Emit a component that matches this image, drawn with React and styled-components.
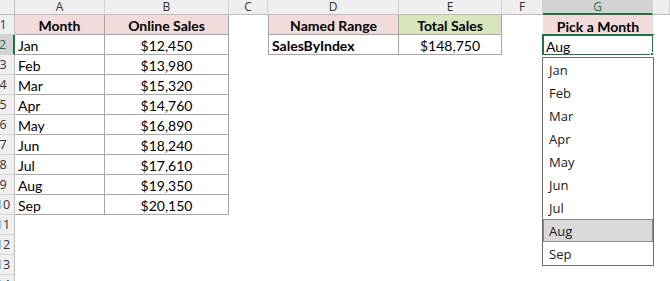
import React from 'react';
import styled, { createGlobalStyle } from 'styled-components';

const GlobalStyle = createGlobalStyle`
  body {
    margin: 0;
    background: #ffffff;
    overflow: hidden;
  }
`;

const widths = [90, 124, 39, 131, 103, 41, 110, 17];
const letters = ['A', 'B', 'C', 'D', 'E', 'F', 'G', 'H'];

const fills = {
  pink: '#f2dcdb',
  green: '#d8e4bc',
};

const sales = [
  ['Jan', '$12,450'],
  ['Feb', '$13,980'],
  ['Mar', '$15,320'],
  ['Apr', '$14,760'],
  ['May', '$16,890'],
  ['Jun', '$18,240'],
  ['Jul', '$17,610'],
  ['Aug', '$19,350'],
  ['Sep', '$20,150'],
];

const months = ['Jan', 'Feb', 'Mar', 'Apr', 'May', 'Jun', 'Jul', 'Aug', 'Sep'];

// cells keyed by row then column letter
const cells = {
  1: {
    A: { text: 'Month', fill: 'pink', bold: true, align: 'center', boxed: true },
    B: { text: 'Online Sales', fill: 'pink', bold: true, align: 'center', boxed: true },
    D: { text: 'Named Range', fill: 'pink', bold: true, align: 'center', boxed: true, left: true },
    E: { text: 'Total Sales', fill: 'green', bold: true, align: 'center', boxed: true },
    G: { text: 'Pick a Month', fill: 'pink', bold: true, align: 'center' },
  },
  2: {
    D: { text: 'SalesByIndex', bold: true, boxed: true, left: true },
    E: { text: '$148,750', align: 'center', boxed: true },
  },
};
sales.forEach(([m, v], i) => {
  const r = i + 2;
  cells[r] = cells[r] || {};
  cells[r].A = { text: m, boxed: true };
  cells[r].B = { text: v, align: 'center', boxed: true };
});

const Sheet = styled.div`
  display: grid;
  grid-template-columns: 15px ${widths.map((w) => w + 'px').join(' ')};
  grid-template-rows: 15px repeat(14, 20px);
  font-family: Lato, 'Liberation Sans', sans-serif;
  font-size: 14px;
  color: #000;
`;

const Corner = styled.div`
  background: #efefef;
  border-right: 1px solid #bdbdbd;
  border-bottom: 1px solid #bdbdbd;
`;

const ColHead = styled.div`
  display: flex;
  align-items: center;
  justify-content: center;
  background: ${(p) => (p.$active ? '#d2d2d2' : '#efefef')};
  color: ${(p) => (p.$active ? '#217346' : '#333')};
  border-right: 1px solid #d4d4d4;
  border-bottom: ${(p) => (p.$active ? '2px solid #217346' : '1px solid #bdbdbd')};
  font-family: 'Open Sans', sans-serif;
  font-size: 12px;
  line-height: 14px;
`;

const RowHead = styled.div`
  display: flex;
  align-items: center;
  justify-content: center;
  padding-right: 8px;
  background: ${(p) => (p.$active ? '#d2d2d2' : '#efefef')};
  color: ${(p) => (p.$active ? '#217346' : '#333')};
  border-bottom: 1px solid #d4d4d4;
  border-right: ${(p) => (p.$active ? '2px solid #217346' : '1px solid #bdbdbd')};
  font-family: 'Open Sans', sans-serif;
  font-size: 12.5px;
  white-space: nowrap;
`;

const Cell = styled.div`
  position: relative;
  display: flex;
  align-items: flex-end;
  justify-content: ${(p) => (p.$align === 'center' ? 'center' : 'flex-start')};
  padding: 0 3px;
  background: ${(p) => fills[p.$fill] || '#fff'};
  font-weight: ${(p) => (p.$bold ? 700 : 400)};
  border-right: ${(p) => (p.$boxed ? '1px solid #a6a6a6' : 'none')};
  border-bottom: ${(p) => (p.$boxed ? '1px solid #a6a6a6' : 'none')};
  border-left: ${(p) => (p.$left ? '1px solid #a6a6a6' : 'none')};
  white-space: nowrap;
  line-height: 16px;
`;

const Selection = styled.div`
  position: absolute;
  inset: -1px;
  border: 2px solid #217346;
  pointer-events: none;
`;

const Handle = styled.div`
  position: absolute;
  right: -4px;
  bottom: -4px;
  width: 5px;
  height: 5px;
  background: #217346;
  border: 1px solid #fff;
`;

const ArrowButton = styled.div`
  position: absolute;
  left: 112px;
  top: 1px;
  width: 14px;
  height: 17px;
  display: flex;
  align-items: center;
  justify-content: center;
  background: #f3f3f3;
  border: 1px solid #c8c8c8;
`;

const List = styled.div`
  position: absolute;
  left: -1px;
  top: 22px;
  width: 112px;
  box-sizing: border-box;
  background: #fff;
  border: 1px solid #6e6e6e;
  z-index: 2;
`;

const Item = styled.div`
  height: 23px;
  box-sizing: border-box;
  display: flex;
  align-items: center;
  padding-left: ${(p) => (p.$active ? '5px' : '6px')};
  background: ${(p) => (p.$active ? '#d9d9d9' : 'transparent')};
  border: ${(p) => (p.$active ? '1px solid #8a8a8a' : 'none')};
  font-family: 'Open Sans', sans-serif;
  font-size: 13px;
  color: #1a1a1a;
`;

function SelectedCell() {
  return (
    <Cell>
      Aug
      <Selection />
      <Handle />
      <ArrowButton>
        <svg width="7" height="4" viewBox="0 0 7 4">
          <polygon points="0,0 7,0 3.5,4" fill="#6d6d6d" />
        </svg>
      </ArrowButton>
      <List>
        {months.map((m) => (
          <Item key={m} $active={m === 'Aug'}>{m}</Item>
        ))}
      </List>
    </Cell>
  );
}

export default function App() {
  const rows = Array.from({ length: 14 }, (_, i) => i + 1);
  return (
    <>
      <GlobalStyle />
      <Sheet>
        <Corner />
        {letters.map((l) => (
          <ColHead key={l} $active={l === 'G'}>{l === 'H' ? '' : l}</ColHead>
        ))}
        {rows.map((r) => (
          <React.Fragment key={r}>
            <RowHead $active={r === 2}>{r}</RowHead>
            {letters.map((l) => {
              if (r === 2 && l === 'G') return <SelectedCell key={l} />;
              const c = (cells[r] || {})[l];
              if (!c) return <Cell key={l} />;
              return (
                <Cell
                  key={l}
                  $fill={c.fill}
                  $bold={c.bold}
                  $align={c.align}
                  $boxed={c.boxed}
                  $left={c.left}
                >
                  {c.text}
                </Cell>
              );
            })}
          </React.Fragment>
        ))}
      </Sheet>
    </>
  );
}
